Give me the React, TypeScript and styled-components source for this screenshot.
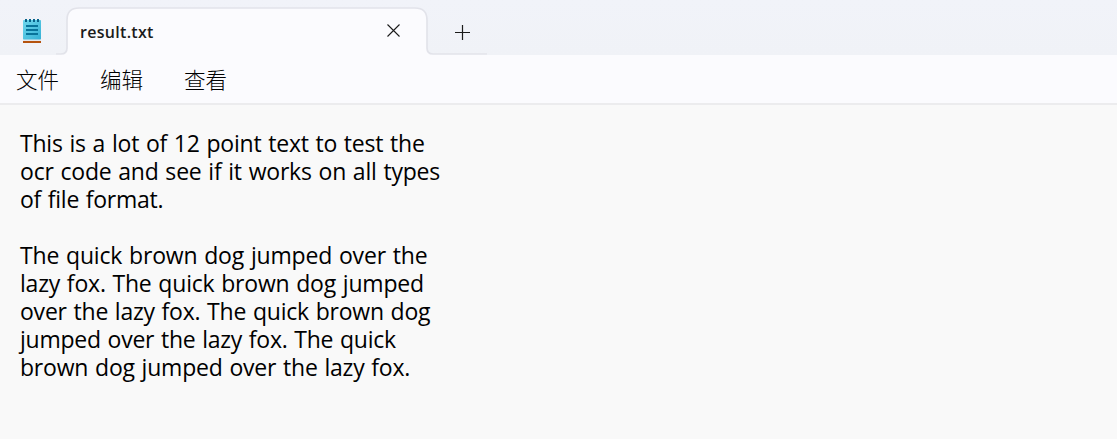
import React from "react";
import styled, { createGlobalStyle } from "styled-components";

const GlobalStyle = createGlobalStyle`
  html, body { margin: 0; padding: 0; }
  body { background: #f9f9f9; overflow: hidden; }
`;

const Window = styled.div`
  display: flex;
  flex-direction: column;
  width: 1117px;
  height: 439px;
  overflow: hidden;
  background: #f9f9f9;
  font-family: "Noto Sans", "Noto Sans CJK SC", sans-serif;
`;

const TitleBar = styled.header`
  display: flex;
  height: 55px;
  background: linear-gradient(#f1f3f9, #f0f2f7);
  box-sizing: border-box;
`;

const AppIcon = styled.svg`
  flex: none;
  width: 20px;
  height: 26px;
  margin: 18px 14px 0 22px;
`;

const TabArea = styled.div`
  position: relative;
  display: flex;
  width: 431px;
  height: 55px;
`;

const TabShape = styled.svg`
  position: absolute;
  inset: 0;
`;

const Tab = styled.div`
  position: relative;
  display: flex;
  align-items: center;
  justify-content: space-between;
  box-sizing: border-box;
  width: 372px;
  height: 47px;
  margin-top: 8px;
  padding: 0 28px 0 24px;
`;

const TabTitle = styled.span`
  font: 600 16px/22px "Open Sans", "Noto Sans", sans-serif;
  letter-spacing: 0.3px;
  color: #1b1b1b;
`;

const Glyph = styled.svg<{ $top: number }>`
  position: relative;
  display: block;
  flex: none;
  margin-top: ${(p) => p.$top}px;
`;

const NewTab = styled.div`
  width: 15px;
  margin-left: 27px;
`;

const MenuBar = styled.nav`
  display: flex;
  gap: 41px;
  box-sizing: border-box;
  height: 50px;
  padding: 8px 0 0 16px;
  background: #fbfbfe;
  border-bottom: 2px solid #ececee;
`;

const MenuItem = styled.span`
  font: 300 21.5px/32px "Noto Sans CJK SC", sans-serif;
  width: 43px;
  color: #000;
`;

const Editor = styled.main`
  display: flex;
  flex-direction: column;
  padding: 24px 20px;
`;

const Line = styled.div<{ $spacing: number }>`
  height: 28px;
  font: 400 23px/28px "Open Sans", "Noto Sans", sans-serif;
  letter-spacing: ${(p) => p.$spacing}px;
  word-spacing: 1px;
  white-space: pre;
  color: #000;
`;

const lines: [string, number][] = [
  ["This is a lot of 12 point text to test the", -0.21],
  ["ocr code and see if it works on all types", -0.2],
  ["of file format.", -0.25],
  ["", 0],
  ["The quick brown dog jumped over the", -0.17],
  ["lazy fox. The quick brown dog jumped", -0.2],
  ["over the lazy fox. The quick brown dog", -0.22],
  ["jumped over the lazy fox. The quick", -0.24],
  ["brown dog jumped over the lazy fox.", -0.2],
];

export default function App() {
  return (
    <Window>
      <GlobalStyle />
      <TitleBar>
        <AppIcon viewBox="0 0 20 26">
          <defs>
            <linearGradient id="pad" x1="0" y1="0" x2="1" y2="1">
              <stop offset="0" stopColor="#6ed7ed" />
              <stop offset="1" stopColor="#35b0d5" />
            </linearGradient>
          </defs>
          <rect x="1" y="21" width="18" height="2" fill="#e4e7ec" />
          <rect x="1" y="23" width="18" height="2" fill="#b5530e" />
          <rect x="1" y="2" width="18" height="19.5" rx="0.8" fill="url(#pad)" />
          <path d="M4 1v3M8 1v3M12 1v3M16 1v3" stroke="#08638a" strokeWidth="2" />
          <path d="M4 8h12M4 12h12M4 16h12" stroke="#08739a" strokeWidth="2" />
        </AppIcon>
        <TabArea>
          <TabShape width="431" height="55" viewBox="0 0 431 55" fill="none">
            <path
              d="M0 54H5Q11 54 11 48V20Q11 8 23 8H359Q371 8 371 20V48Q371 54 377 54H431V55H0Z"
              fill="#fbfbfe"
            />
            <path
              d="M0 54H5Q11 54 11 48V20Q11 8 23 8H359Q371 8 371 20V48Q371 54 377 54H431"
              stroke="#e2e3ea"
              strokeWidth="1.7"
            />
          </TabShape>
          <Tab>
            <TabTitle>result.txt</TabTitle>
            <Glyph $top={-3} width="13" height="13" viewBox="0 0 13 13">
              <path d="M.5.5l12 12M12.5.5l-12 12" stroke="#1b1b1b" strokeWidth="1.1" />
            </Glyph>
          </Tab>
          <NewTab>
            <Glyph $top={25} width="15" height="15" viewBox="0 0 15 15">
              <path d="M0 7.5h15M7.5 0v15" stroke="#1b1b1b" strokeWidth="1.2" />
            </Glyph>
          </NewTab>
        </TabArea>
      </TitleBar>
      <MenuBar>
        <MenuItem>文件</MenuItem>
        <MenuItem>编辑</MenuItem>
        <MenuItem>查看</MenuItem>
      </MenuBar>
      <Editor>
        {lines.map(([text, spacing], i) => (
          <Line key={i} $spacing={spacing}>
            {text}
          </Line>
        ))}
      </Editor>
    </Window>
  );
}
